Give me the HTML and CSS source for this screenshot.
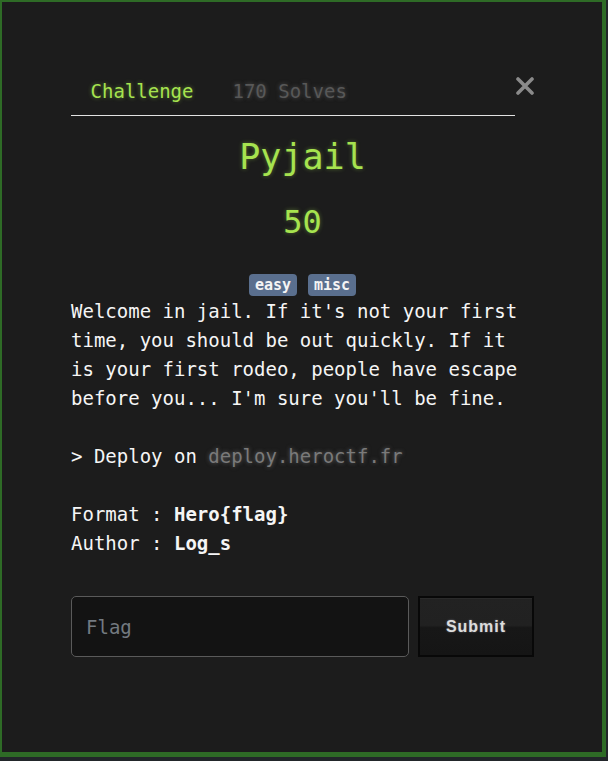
FILE: index.html
```html
<!DOCTYPE html>
<html>
<head>
<meta charset="utf-8">
<link rel="stylesheet" href="styles.css">
</head>
<body>
<div class="modal">
  <div class="modal-body">
    <div class="header">
      <ul class="tabs">
        <li class="tab active">Challenge</li>
        <li class="tab">170 Solves</li>
      </ul>
      <button class="close" aria-label="Close">
        <svg width="18" height="18" viewBox="0 0 18 18"><path d="M2 2 L16 16 M16 2 L2 16" stroke="#8a8a8a" stroke-width="3.6" stroke-linecap="round"/></svg>
      </button>
    </div>
    <h3 class="name">Pyjail</h3>
    <h4 class="value">50</h4>
    <div class="tags">
      <span class="tag">easy</span>
      <span class="tag">misc</span>
    </div>
    <div class="desc">
      <p>Welcome in jail. If it's not your first time, you should be out quickly. If it is your first rodeo, people have escape before you... I'm sure you'll be fine.</p>
      <p>&gt; Deploy on <span class="code">deploy.heroctf.fr</span></p>
      <p>Format : <strong>Hero{flag}</strong><br>Author : <strong>Log_s</strong></p>
    </div>
    <form class="submit-row">
      <input class="flag" type="text" placeholder="Flag">
      <button class="submit" type="button">Submit</button>
    </form>
  </div>
</div>
</body>
</html>
```

FILE: styles.css
```css
html, body {
  margin: 0;
  padding: 0;
  background: #22262a;
}
body {
  font-family: "DejaVu Sans Mono", "Liberation Mono", monospace;
}
.modal {
  box-sizing: border-box;
  width: 606px;
  height: 757px;
  border-style: solid;
  border-color: #2e6b26;
  border-width: 2px 4px 5px 2px;
  background: #1c1c1c;
}
.modal-body {
  padding: 67px 68px 0 69px;
}
.header {
  display: flex;
  align-items: flex-start;
}
.tabs {
  list-style: none;
  margin: 0;
  padding: 0;
  display: flex;
  width: 445px;
  border-bottom: 1px solid #e2e2e2;
}
.tab {
  font-size: 19px;
  line-height: 24px;
  padding: 10px 19.5px 12px;
  color: #585858;
  text-shadow: 0 0 4px rgba(120,120,120,0.6);
}
.tab.active {
  color: #a6e34f;
  text-shadow: 0 0 4px rgba(166,227,79,0.45);
}
.close {
  margin: 8px 0 0 1px;
  padding: 0;
  border: 0;
  background: none;
  width: 18px;
  height: 18px;
  display: block;
}
.close svg { display: block; }
.name {
  margin: 21px 0 0;
  text-align: center;
  font-size: 35px;
  line-height: 40px;
  font-weight: normal;
  color: #a6e34f;
  text-shadow: 0 0 4px rgba(166,227,79,0.4);
}
.value {
  margin: 27px 0 0;
  text-align: center;
  font-size: 32px;
  line-height: 36px;
  font-weight: normal;
  color: #a6e34f;
  text-shadow: 0 0 4px rgba(166,227,79,0.4);
}
.tags {
  margin: 34px 0 1px;
  display: flex;
  justify-content: center;
  gap: 11px;
}
.tag {
  background: #5a6f8e;
  color: #f4f4f4;
  font-weight: bold;
  font-size: 15px;
  line-height: 16px;
  padding: 3px 6px;
  border-radius: 4px;
}
.desc {
  color: #f5f5f5;
  font-size: 19px;
  line-height: 29px;
}
.desc p {
  margin: 0 0 29px;
}
.desc p:last-child {
  margin-bottom: 0;
}
.code {
  color: #7a7a7a;
  text-shadow: 0 0 4px rgba(140,140,140,0.6);
}
.submit-row {
  margin: 38px 0 0;
  display: flex;
  gap: 9px;
}
.flag {
  box-sizing: border-box;
  width: 338px;
  height: 61px;
  border: 1px solid #5a5a5a;
  border-radius: 5px;
  background: #131313;
  color: #eee;
  font-family: "DejaVu Sans Mono", "Liberation Mono", monospace;
  font-size: 19px;
  padding: 0 14px;
  outline: none;
}
.flag::placeholder {
  color: #737a80;
}
.submit {
  box-sizing: border-box;
  width: 116px;
  height: 61px;
  border: 2px solid #080808;
  background: linear-gradient(#222222 0, #212121 48%, #171717 52%, #151515 100%);
  box-shadow: inset 0 1px 0 #2a2a2a;
  color: #dcdcdc;
  font-family: "Liberation Sans", Arial, sans-serif;
  font-weight: bold;
  font-size: 16px;
  letter-spacing: 1px;
  text-shadow: 0 0 2px rgba(200,200,220,0.5);
  padding: 0;
}
```
